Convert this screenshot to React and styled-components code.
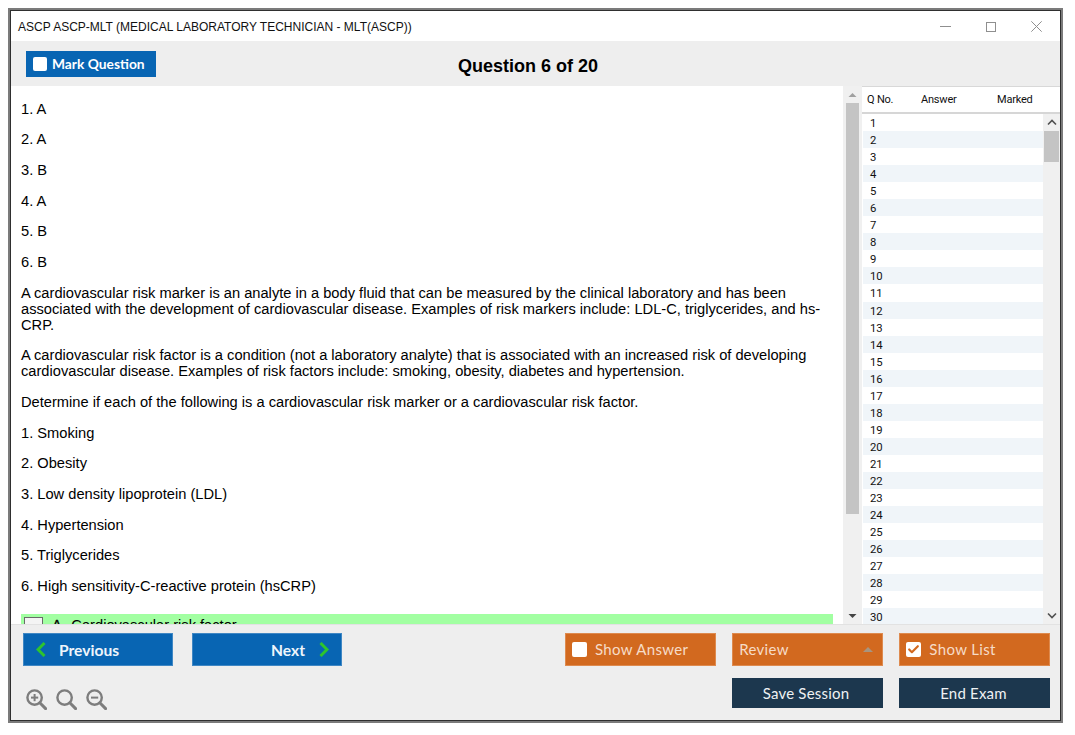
import React from "react";
import styled, { createGlobalStyle } from "styled-components";
import { Check } from "lucide-react";

const GlobalStyle = createGlobalStyle`
  html, body {
    margin: 0;
    padding: 0;
    background: #fff;
  }
  * {
    box-sizing: border-box;
  }
`;

const Page = styled.div`
  width: 1075px;
  height: 735px;
  padding: 8px 12px 12px 8px;
  overflow: hidden;
`;

const Frame = styled.div`
  width: 1055px;
  height: 715px;
  border: 2px solid #7b7b7b;
  display: flex;
`;

const Window = styled.div`
  flex: 1;
  min-width: 0;
  border: 1px solid #2f2f2f;
  display: flex;
  flex-direction: column;
  background: #fff;
`;

const TitleBar = styled.div`
  height: 30px;
  flex: none;
  display: flex;
  align-items: center;
  justify-content: space-between;
  padding: 1px 18px 0 7px;
  font: 12px "Liberation Sans", Arial, sans-serif;
  color: #111;
`;

const WindowControls = styled.div`
  display: flex;
  gap: 35px;
  align-items: center;
`;

const WinIcon = styled.svg`
  width: ${(p) => p.$w}px;
  height: ${(p) => p.$w}px;
  flex: none;
  display: block;
  fill: none;
  stroke: #8f8f8f;
  stroke-width: 1;
`;

const Toolbar = styled.div`
  height: 45px;
  flex: none;
  background: #eeeeee;
  display: flex;
  align-items: flex-start;
  padding: 10px 0 0 15px;
`;

const Heading = styled.div`
  flex: 1;
  padding: 5px 160px 0 0;
  text-align: center;
  font: bold 18px/20px "Liberation Sans", Arial, sans-serif;
  color: #000;
`;

const MarkButton = styled.div`
  width: 130px;
  height: 26px;
  flex: none;
  background: #0865b3;
  color: #fff;
  display: flex;
  align-items: center;
  gap: 5px;
  padding: 0 0 1px 7px;
  font: bold 13.8px "Lato", sans-serif;
`;

const Box = styled.span`
  width: ${(p) => p.$size}px;
  height: ${(p) => p.$size}px;
  flex: none;
  background: #fff;
  border-radius: 2px;
  display: flex;
  align-items: center;
  justify-content: center;
  color: #d2691f;
`;

const Main = styled.div`
  flex: 1;
  min-height: 0;
  display: flex;
  overflow: hidden;
`;

const QuestionPane = styled.div`
  width: 832px;
  flex: none;
  overflow: hidden;
  padding: 0 0 0 10px;
  font: 14.67px/16px "Liberation Sans", Arial, sans-serif;
  color: #000;
`;

const Para = styled.p`
  margin: 14.67px 0;
  padding-right: 8px;
`;

const OptionRow = styled.div`
  background: #a2ffa2;
  height: 30px;
  margin: 20px 10px 0 0;
  display: flex;
  align-items: flex-start;
  padding: 3px 0 0 3px;
`;

const OptionBox = styled.span`
  width: 19px;
  height: 19px;
  flex: none;
  background: #f4f4f4;
  border: 1px solid #6a6a6a;
  margin-right: 9px;
`;

const OptionKey = styled.span`
  margin-right: 5.5px;
  -webkit-text-stroke: 0.3px #000;
`;

const ScrollTrack = styled.div`
  width: ${(p) => p.$w}px;
  flex: none;
  background: #f0f0f0;
  display: flex;
  flex-direction: column;
  align-items: center;
`;

const Thumb = styled.div`
  width: ${(p) => p.$w}px;
  height: ${(p) => p.$h}px;
  background: #c4c4c4;
  flex: none;
`;

const Arrow = styled.svg`
  flex: none;
  display: block;
`;

const ArrowSlot = styled.div`
  height: 17px;
  flex: none;
  display: flex;
  align-items: center;
  justify-content: center;
  margin-top: ${(p) => (p.$end ? "auto" : "0")};
`;

const ListPane = styled.div`
  flex: 1;
  min-width: 0;
  display: flex;
  flex-direction: column;
  border-top: 1px solid #d8d8d8;
  font: 11.3px "Roboto", "Liberation Sans", sans-serif;
  color: #111;
`;

const ListHeader = styled.div`
  height: 27px;
  flex: none;
  display: flex;
  align-items: center;
  border-bottom: 2px solid #d6d6d6;
  padding-left: 5px;
  background: #fff;
  font-size: 11px;
  letter-spacing: -0.2px;
`;

const HeaderCell = styled.span`
  width: ${(p) => p.$w}px;
  flex: none;
`;

const ListBody = styled.div`
  flex: 1;
  min-height: 0;
  display: flex;
  overflow: hidden;
`;

const Rows = styled.div`
  flex: 1;
  min-width: 0;
  padding-left: 1px;
  overflow: hidden;
`;

const Row = styled.div`
  height: 17.05px;
  line-height: 15px;
  padding: 2px 0 0 7px;
  background: ${(p) => (p.$alt ? "#f0f5f9" : "#fff")};
`;

const Footer = styled.div`
  height: 96px;
  flex: none;
  background: #eeeeee;
  border-top: 1px solid #e2e2e2;
  padding: 8px 10px 0 12px;
  display: flex;
  flex-direction: column;
`;

const ButtonRow = styled.div`
  display: flex;
  justify-content: space-between;
`;

const ButtonGroup = styled.div`
  display: flex;
  gap: ${(p) => p.$gap}px;
  align-items: center;
`;

const NavButton = styled.div`
  width: 150px;
  height: 33px;
  background: #0865b3;
  border: 1px solid #3f87c4;
  color: #eef5fb;
  display: flex;
  align-items: center;
  justify-content: ${(p) => (p.$end ? "flex-end" : "flex-start")};
  gap: ${(p) => (p.$end ? 14 : 13)}px;
  padding: 0 ${(p) => (p.$end ? 12 : 0)}px 0 ${(p) => (p.$end ? 0 : 12)}px;
  font: bold 15.6px "Lato", sans-serif;
`;

const OrangeButton = styled.div`
  width: 150.7px;
  height: 33px;
  background: #d2691f;
  border: 1px solid #de8a4e;
  color: #f6dcc8;
  display: flex;
  align-items: center;
  gap: 8px;
  padding: 0 7px 1px 6px;
  font: 15px "Lato", sans-serif;
  letter-spacing: 0.35px;
`;

const Caret = styled.span`
  margin-left: auto;
  margin-right: 2px;
  width: 0;
  height: 0;
  border-left: 5px solid transparent;
  border-right: 5px solid transparent;
  border-bottom: 5px solid #a8947f;
`;

const DarkButton = styled.div`
  width: 151px;
  height: 30px;
  background: #1c374e;
  color: #eef1f3;
  display: flex;
  align-items: center;
  justify-content: center;
  padding-right: 2px;
  font: 15px "Lato", sans-serif;
  letter-spacing: 0.2px;
`;

const ZoomIcon = styled.svg`
  width: 21px;
  height: 21px;
  flex: none;
  display: block;
`;

const LowerRow = styled(ButtonRow)`
  margin-top: 12px;
  align-items: flex-start;
`;

const ZoomGroup = styled(ButtonGroup)`
  padding: 11px 0 0 3px;
`;

const answers = ["1. A", "2. A", "3. B", "4. A", "5. B", "6. B"];
const items = [
  "1. Smoking",
  "2. Obesity",
  "3. Low density lipoprotein (LDL)",
  "4. Hypertension",
  "5. Triglycerides",
  "6. High sensitivity-C-reactive protein (hsCRP)",
];

function Magnifier({ sign }) {
  return (
    <ZoomIcon viewBox="0 0 21 21" fill="none" stroke="#7d7d7d" strokeWidth="2.4">
      <circle cx="8.6" cy="8.6" r="7.2" />
      <path d="M13.8 13.8 L19.6 19.6" strokeWidth="3" strokeLinecap="round" />
      {sign !== "none" && <path d="M5 8.6 H12.2" strokeWidth="2" />}
      {sign === "plus" && <path d="M8.6 5 V12.2" strokeWidth="2" />}
    </ZoomIcon>
  );
}

function TriangleArrow({ down, color }) {
  return (
    <Arrow width="9" height="6" viewBox="0 0 9 6">
      <path d={down ? "M0.5 1 L4.5 5 L8.5 1 Z" : "M0.5 5 L4.5 1 L8.5 5 Z"} fill={color} />
    </Arrow>
  );
}

function Chevron({ down }) {
  return (
    <Arrow width="10" height="7" viewBox="0 0 10 7" fill="none" stroke="#505050" strokeWidth="1.6">
      <path d={down ? "M1 1.5 L5 5.5 L9 1.5" : "M1 5.5 L5 1.5 L9 5.5"} />
    </Arrow>
  );
}

function NavChevron({ right }) {
  return (
    <Arrow width="10" height="15" viewBox="0 0 10 15" fill="none" stroke="#2ec42e" strokeWidth="3">
      <path d={right ? "M1.5 1 L8 7.5 L1.5 14" : "M8.5 1 L2 7.5 L8.5 14"} />
    </Arrow>
  );
}

export default function App() {
  return (
    <Page>
      <GlobalStyle />
      <Frame>
        <Window>
          <TitleBar>
            <span>ASCP ASCP-MLT (MEDICAL LABORATORY TECHNICIAN - MLT(ASCP))</span>
            <WindowControls>
              <WinIcon $w={11} viewBox="0 0 11 11">
                <path d="M0 5.5 H11" />
              </WinIcon>
              <WinIcon $w={10} viewBox="0 0 10 10">
                <rect x="0.5" y="0.5" width="9" height="9" />
              </WinIcon>
              <WinIcon $w={11} viewBox="0 0 11 11">
                <path d="M0.3 0.3 L10.7 10.7 M10.7 0.3 L0.3 10.7" />
              </WinIcon>
            </WindowControls>
          </TitleBar>

          <Toolbar>
            <MarkButton>
              <Box $size={14} />
              Mark Question
            </MarkButton>
            <Heading>Question 6 of 20</Heading>
          </Toolbar>

          <Main>
            <QuestionPane>
              {answers.map((a) => (
                <Para key={a}>{a}</Para>
              ))}
              <Para>
                A cardiovascular risk marker is an analyte in a body fluid that can be measured by the clinical
                laboratory and has been associated with the development of cardiovascular disease. Examples of
                risk markers include: LDL-C, triglycerides, and hs-CRP.
              </Para>
              <Para>
                A cardiovascular risk factor is a condition (not a laboratory analyte) that is associated with an
                increased risk of developing cardiovascular disease. Examples of risk factors include: smoking,
                obesity, diabetes and hypertension.
              </Para>
              <Para>Determine if each of the following is a cardiovascular risk marker or a cardiovascular risk factor.</Para>
              {items.map((a) => (
                <Para key={a}>{a}</Para>
              ))}
              <OptionRow>
                <OptionBox />
                <OptionKey>A.</OptionKey>
                Cardiovascular risk factor
              </OptionRow>
            </QuestionPane>

            <ScrollTrack $w={19}>
              <ArrowSlot>
                <TriangleArrow color="#a0a0a0" />
              </ArrowSlot>
              <Thumb $w={13} $h={411} />
              <ArrowSlot $end>
                <TriangleArrow down color="#444" />
              </ArrowSlot>
            </ScrollTrack>

            <ListPane>
              <ListHeader>
                <HeaderCell $w={54}>Q No.</HeaderCell>
                <HeaderCell $w={76}>Answer</HeaderCell>
                <HeaderCell $w={50}>Marked</HeaderCell>
              </ListHeader>
              <ListBody>
                <Rows>
                  {Array.from({ length: 30 }, (_, i) => (
                    <Row key={i} $alt={i % 2 === 1}>
                      {i + 1}
                    </Row>
                  ))}
                </Rows>
                <ScrollTrack $w={17}>
                  <ArrowSlot>
                    <Chevron />
                  </ArrowSlot>
                  <Thumb $w={15} $h={31} />
                  <ArrowSlot $end>
                    <Chevron down />
                  </ArrowSlot>
                </ScrollTrack>
              </ListBody>
            </ListPane>
          </Main>

          <Footer>
            <ButtonRow>
              <ButtonGroup $gap={19}>
                <NavButton>
                  <NavChevron />
                  Previous
                </NavButton>
                <NavButton $end>
                  Next
                  <NavChevron right />
                </NavButton>
              </ButtonGroup>
              <ButtonGroup $gap={16.5}>
                <OrangeButton>
                  <Box $size={15} />
                  Show Answer
                </OrangeButton>
                <OrangeButton>
                  Review
                  <Caret />
                </OrangeButton>
                <OrangeButton>
                  <Box $size={15}>
                    <Check size={13} strokeWidth={4} />
                  </Box>
                  Show List
                </OrangeButton>
              </ButtonGroup>
            </ButtonRow>
            <LowerRow>
              <ZoomGroup $gap={9}>
                <Magnifier sign="plus" />
                <Magnifier sign="none" />
                <Magnifier sign="minus" />
              </ZoomGroup>
              <ButtonGroup $gap={16.5}>
                <DarkButton>Save Session</DarkButton>
                <DarkButton>End Exam</DarkButton>
              </ButtonGroup>
            </LowerRow>
          </Footer>
        </Window>
      </Frame>
    </Page>
  );
}
